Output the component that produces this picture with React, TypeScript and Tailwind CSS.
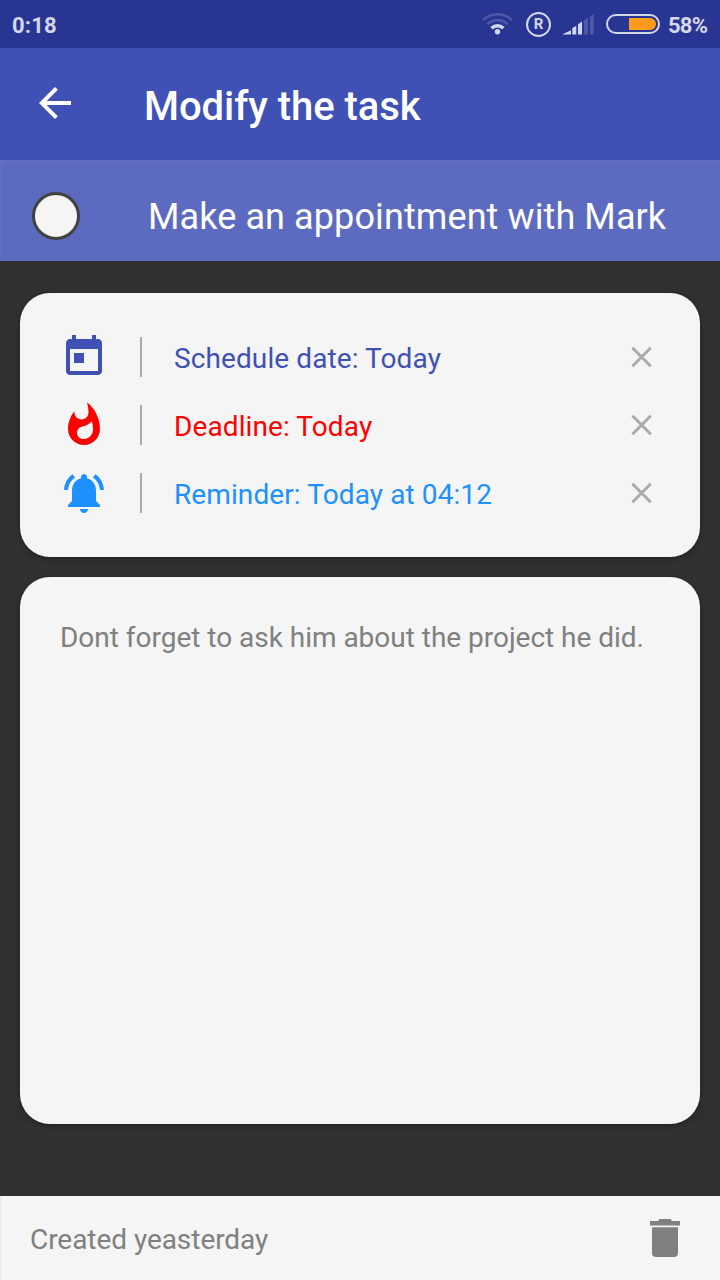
import React from 'react';

const TODAY =
  'M19 3h-1V1h-2v2H8V1H6v2H5c-1.11 0-1.99.9-1.99 2L3 19c0 1.1.89 2 2 2h14c1.1 0 2-.9 2-2V5c0-1.1-.9-2-2-2zm0 16H5V8h14v11zM7 10h5v5H7z';
const FLAME =
  'M13.5.67s.74 2.65.74 4.8c0 2.06-1.35 3.73-3.41 3.73-2.07 0-3.63-1.67-3.63-3.73l.03-.36C5.21 7.51 4 10.62 4 14c0 4.42 3.58 8 8 8s8-3.58 8-8C20 8.61 17.41 3.8 13.5.67zM11.71 19c-1.78 0-3.22-1.4-3.22-3.14 0-1.62 1.05-2.76 2.81-3.12 1.77-.36 3.6-1.21 4.62-2.58.39 1.29.59 2.65.59 4.04 0 2.65-2.15 4.8-4.8 4.8z';
const BELL =
  'M7.58 4.08L6.15 2.65C3.75 4.48 2.17 7.3 2.03 10.5h2c.15-2.65 1.51-4.97 3.55-6.42zm12.39 6.42h2c-.15-3.2-1.73-6.02-4.12-7.85l-1.42 1.43c2.02 1.45 3.39 3.77 3.54 6.42zM18 11c0-3.07-1.64-5.64-4.5-6.32V4c0-.83-.67-1.5-1.5-1.5s-1.5.67-1.5 1.5v.68C7.63 5.36 6 7.92 6 11v5l-2 2v1h16v-1l-2-2v-5zm-6 11c.14 0 .27-.01.4-.04.65-.14 1.18-.58 1.44-1.18.1-.24.15-.5.15-.78h-4c.01 1.1.9 2 2.01 2z';
const ARROW_BACK = 'M20 11H7.83l5.59-5.59L12 4l-8 8 8 8 1.41-1.41L7.83 13H20v-2z';

const rows = [
  { icon: TODAY, text: 'Schedule date: Today', color: 'text-[#3f51b5]' },
  { icon: FLAME, text: 'Deadline: Today', color: 'text-[#ff0000]' },
  { icon: BELL, text: 'Reminder: Today at 04:12', color: 'text-[#1e90ff]' },
];

function StatusBar() {
  return (
    <div className="flex h-12 items-center justify-between bg-[#283593] pl-3 text-[22px] leading-[26px] font-bold text-[#d4d7e9]">
      <span className="mt-[3px] tracking-[0.2px]">0:18</span>
      <div className="flex items-center">
        <svg className="mr-3 h-12 w-8" viewBox="482 0 32 48" fill="none" strokeWidth="2.6">
          <path d="M483 20.2a20.6 20.6 0 0 1 29 0" stroke="#4d58a6" />
          <path d="M487.2 24.4a14.6 14.6 0 0 1 20.6 0" stroke="#4d58a6" />
          <path d="M491.6 28.2a8.4 8.4 0 0 1 11.8 0" stroke="#d4d7e9" strokeWidth="3.4" />
          <circle cx="497.5" cy="31.8" r="2.7" fill="#d4d7e9" />
        </svg>
        <div className="mt-px mr-3 flex h-[25px] w-[25px] items-center justify-center rounded-full border-2 border-[#d4d7e9] text-[15px] leading-none font-bold">
          R
        </div>
        <svg className="mr-3 h-12 w-[31px]" viewBox="563 0 31 48">
          <path d="M563 34.5v-.6l8-3.6v4.2zM572.3 34.5v-6.6l4-2.2v8.8zM578 34.5V24.2l4-2.6v12.9z" fill="#d4d7e9" />
          <path d="M584 34.5V20.4l4-2.8v16.9zM590 34.5V16.6l3.7-2.8v20.7z" fill="#4d58a6" />
        </svg>
        <svg className="mr-2 h-12 w-[54px]" viewBox="606 0 54 48">
          <rect x="607" y="15" width="52" height="18" rx="9" fill="none" stroke="#d4d7e9" strokeWidth="2" />
          <path d="M629 18h21a6 6 0 0 1 0 12h-21z" fill="#ff9c1a" />
        </svg>
        <span className="mt-[3px] w-[52px] tracking-[-0.8px]">58%</span>
      </div>
    </div>
  );
}

export default function App() {
  return (
    <div className="flex h-[1280px] w-[720px] flex-col overflow-hidden bg-[#303030] font-['Roboto',sans-serif]">
      <StatusBar />
      <header className="flex h-28 items-center bg-[#3f51b5] pl-[31px] text-white">
        <svg className="mr-[65px] mb-0.5 h-12 w-12" viewBox="0 0 24 24" fill="currentColor">
          <path d={ARROW_BACK} />
        </svg>
        <h1 className="mt-1 text-[40px] leading-[47px] font-medium tracking-[-0.05px] whitespace-nowrap">Modify the task</h1>
      </header>
      <div className="flex h-[101px] items-center border-t border-l border-[#6470bf] bg-[#5c6bc0] pl-[31px] text-white">
        <div className="mt-[9px] mr-[68px] h-12 w-12 rounded-full border-3 border-[#424242] bg-[#f5f5f5]" />
        <span className="mt-[11px] text-[36px] leading-[42px] tracking-[0.1px] whitespace-nowrap">
          Make an appointment with Mark
        </span>
      </div>
      <main className="flex flex-1 flex-col gap-5 px-5 pt-8 pb-[72px]">
        <section className="flex flex-col gap-5 rounded-[30px] bg-[#f5f5f5] p-10 shadow-[0_2px_5px_rgba(0,0,0,0.3)]">
          {rows.map((row) => (
            <div key={row.text} className={`flex h-12 items-center ${row.color}`}>
              <svg className="h-12 w-12" viewBox="0 0 24 24" fill="currentColor">
                <path d={row.icon} />
              </svg>
              <div className="ml-8 h-10 w-0.5 bg-[#aaaaaa]" />
              <span className="mt-0.5 ml-8 flex-1 text-[28px] leading-[33px] tracking-[0.1px] whitespace-nowrap">
                {row.text}
              </span>
              <svg className="mr-[7px] h-[22px] w-[22px]" viewBox="0 0 22 22" stroke="#aaaaaa" strokeWidth="3">
                <path d="M1.4 1.8l18.4 18.4M19.8 1.8L1.4 20.2" />
              </svg>
            </div>
          ))}
        </section>
        <section className="flex-1 rounded-[30px] bg-[#f5f5f5] px-10 pt-11 text-[28px] leading-[33px] tracking-[-0.02px] whitespace-nowrap text-[#808080] shadow-[0_2px_5px_rgba(0,0,0,0.3)]">
          Dont forget to ask him about the project he did.
        </section>
      </main>
      <footer className="flex h-[84px] items-center justify-between border-l border-[#e8e8e8] bg-[#f5f5f5] pr-10 pl-[29px] text-[#808080]">
        <span className="mt-0.5 text-[28px] leading-[33px] tracking-[-0.05px]">Created yeasterday</span>
        <svg className="h-[38px] w-[30px]" viewBox="0 0 30 38" fill="currentColor">
          <path d="M0 2h8l1.5-2h11L22 2h8v4.6H0z" />
          <path d="M2 8.3h26V34a4 4 0 0 1-4 4H6a4 4 0 0 1-4-4z" />
        </svg>
      </footer>
    </div>
  );
}
